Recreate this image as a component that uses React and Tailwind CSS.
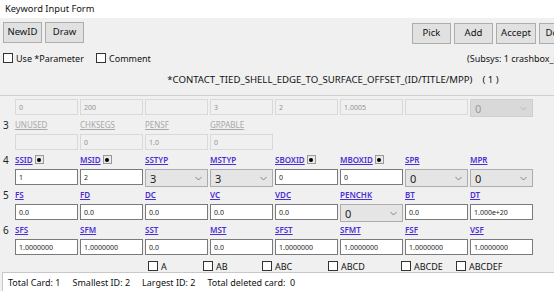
import React from 'react';

const ui = { fontFamily: '"Noto Sans", "Open Sans", sans-serif' };

function Btn({ children, w }) {
    return (
        <div className={`h-[21px] ${w} flex items-center justify-center bg-[#e1e1e1] border border-[#adadad] text-[9.5px] text-[#111]`}>
            {children}
        </div>
    );
}

function Check({ label, className = '' }) {
    return (
        <div className={`flex items-center gap-[3px] ${className}`}>
            <div className="w-[10px] h-[10px] bg-white border border-[#333]" />
            <span className="text-[9px] text-[#111] leading-none">{label}</span>
        </div>
    );
}

function Field({ value = '', disabled }) {
    return (
        <div
            className={`h-[16px] w-[63px] flex items-center pl-[3px] text-[7px] leading-none border ${
                disabled ? 'bg-[#f0f0f0] border-[#d9d9d9] text-[#909090]' : 'bg-white border-[#7a7a7a] text-[#222]'
            }`}
        >
            {value}
        </div>
    );
}

function Sel({ value, disabled }) {
    return (
        <div
            className={`h-[18px] w-[63px] flex items-center justify-between pl-[4px] pr-[5px] border ${
                disabled ? 'bg-[#d9d9d9] border-[#cfcfcf] text-[#9a9a9a]' : 'bg-[#e5e5e5] border-[#adadad] text-[#222]'
            }`}
        >
            <span className="text-[11px] leading-none">{value}</span>
            <svg width="7" height="5" viewBox="0 0 7 5" className={disabled ? 'text-[#b5b5b5]' : 'text-[#777]'}>
                <path d="M0.5 1 L3.5 4 L6.5 1" fill="none" stroke="currentColor" strokeWidth="0.9" />
            </svg>
        </div>
    );
}

function Label({ text, dot, disabled }) {
    if (!text) return <div />;
    return (
        <div className="flex items-center gap-[2px]">
            <span
                className={`text-[8px] leading-none underline underline-offset-[1px] ${
                    disabled ? 'text-[#a8a8a8]' : 'text-[#4b2fd3] font-semibold'
                }`}
            >
                {text}
            </span>
            {dot && (
                <div className="w-[9px] h-[9px] border border-[#9a9a9a] bg-[#e8e8e8] flex items-center justify-center">
                    <div className="w-[4px] h-[4px] rounded-full bg-black" />
                </div>
            )}
        </div>
    );
}

function LabelRow({ num, labels, disabled }) {
    return (
        <div className="flex h-[17px] items-center pl-[3px]">
            <span className="w-[12px] text-[10px] text-[#222] leading-none">{num}</span>
            <div className="grid grid-cols-[repeat(8,63px)] gap-x-[2px]">
                {labels.map((l, i) => (
                    <Label key={i} text={l[0]} dot={l[1]} disabled={disabled} />
                ))}
            </div>
        </div>
    );
}

function InputRow({ cells, h = 'h-[18px]', pt = 'pt-[1px]' }) {
    return (
        <div className={`flex ${h} ${pt} pl-[15px]`}>
            <div className="grid grid-cols-[repeat(8,63px)] gap-x-[2px] items-start">
                {cells.map((c, i) =>
                    c.sel ? <Sel key={i} value={c.v} disabled={c.d} /> : <Field key={i} value={c.v} disabled={c.d} />
                )}
            </div>
        </div>
    );
}

const f = (v, d) => ({ v, d });
const s = (v, d) => ({ v, d, sel: true });

export default function App() {
    return (
        <div className="w-[554px] h-[291px] overflow-hidden bg-[#f0f0f0]" style={ui}>
            <div className="w-[666px] flex flex-col">
                <div className="h-[18px] bg-white flex items-center pl-[5px] text-[9.3px] text-[#111]">Keyword Input Form</div>

                <div className="flex pt-[4px] px-[3px] h-[32px]">
                    <div className="flex gap-[3px]">
                        <Btn w="w-[39px]">NewID</Btn>
                        <Btn w="w-[39px]">Draw</Btn>
                    </div>
                    <div className="flex gap-[3px] ml-[328px] pt-[1px]">
                        <Btn w="w-[39px]">Pick</Btn>
                        <Btn w="w-[39px]">Add</Btn>
                        <Btn w="w-[40px]">Accept</Btn>
                        <Btn w="w-[42px]">Delete</Btn>
                        <Btn w="w-[42px]">Default</Btn>
                    </div>
                </div>

                <div className="flex items-center h-[16px] pl-[3px]">
                    <Check label="Use *Parameter" className="w-[93px]" />
                    <Check label="Comment" className="w-[371px]" />
                    <span className="text-[9px] text-[#111] leading-none">(Subsys: 1 crashbox_main.k)</span>
                </div>

                <div className="h-[29px] flex items-center justify-center text-[9.6px] text-[#111]">
                    *CONTACT_TIED_SHELL_EDGE_TO_SURFACE_OFFSET_(ID/TITLE/MPP)&nbsp;&nbsp;&nbsp;&nbsp;( 1 )
                </div>

                <div className="h-px bg-[#cfcfcf]" />

                <InputRow
                    h="h-[20px]"
                    pt="pt-[3px]"
                    cells={[f('0', 1), f('200', 1), f('', 1), f('3', 1), f('2', 1), f('1.0005', 1), f('', 1), s('0', 1)]}
                />

                <LabelRow num="3" disabled labels={[['UNUSED'], ['CHKSEGS'], ['PENSF'], ['GRPABLE']]} />
                <InputRow cells={[f('', 1), f('0', 1), f('1.0', 1), f('0', 1)]} />

                <LabelRow
                    num="4"
                    labels={[['SSID', 1], ['MSID', 1], ['SSTYP'], ['MSTYP'], ['SBOXID', 1], ['MBOXID', 1], ['SPR'], ['MPR']]}
                />
                <InputRow cells={[f('1'), f('2'), s('3'), s('3'), f('0'), f('0'), s('0'), s('0')]} />

                <LabelRow num="5" labels={[['FS'], ['FD'], ['DC'], ['VC'], ['VDC'], ['PENCHK'], ['BT'], ['DT']]} />
                <InputRow cells={[f('0.0'), f('0.0'), f('0.0'), f('0.0'), f('0.0'), s('0'), f('0.0'), f('1.000e+20')]} />

                <LabelRow num="6" labels={[['SFS'], ['SFM'], ['SST'], ['MST'], ['SFST'], ['SFMT'], ['FSF'], ['VSF']]} />
                <InputRow
                    cells={[
                        f('1.0000000'),
                        f('1.0000000'),
                        f('0.0'),
                        f('0.0'),
                        f('1.0000000'),
                        f('1.0000000'),
                        f('1.0000000'),
                        f('1.0000000'),
                    ]}
                />

                <div className="flex items-end h-[16px] pb-[1px] pl-[148px]">
                    <Check label="A" className="w-[55px]" />
                    <Check label="AB" className="w-[59px]" />
                    <Check label="ABC" className="w-[66px]" />
                    <Check label="ABCD" className="w-[73px]" />
                    <Check label="ABCDE" className="w-[55px]" />
                    <Check label="ABCDEF" />
                </div>

                <div className="h-[22px] mx-[2px] bg-white border border-[#c8c8c8] flex items-center pl-[5px] text-[9px] text-[#111] gap-[12px]">
                    <span>Total Card: 1</span>
                    <span>Smallest ID: 2</span>
                    <span>Largest ID: 2</span>
                    <span>Total deleted card:&nbsp;&nbsp;0</span>
                </div>
            </div>
        </div>
    );
}
